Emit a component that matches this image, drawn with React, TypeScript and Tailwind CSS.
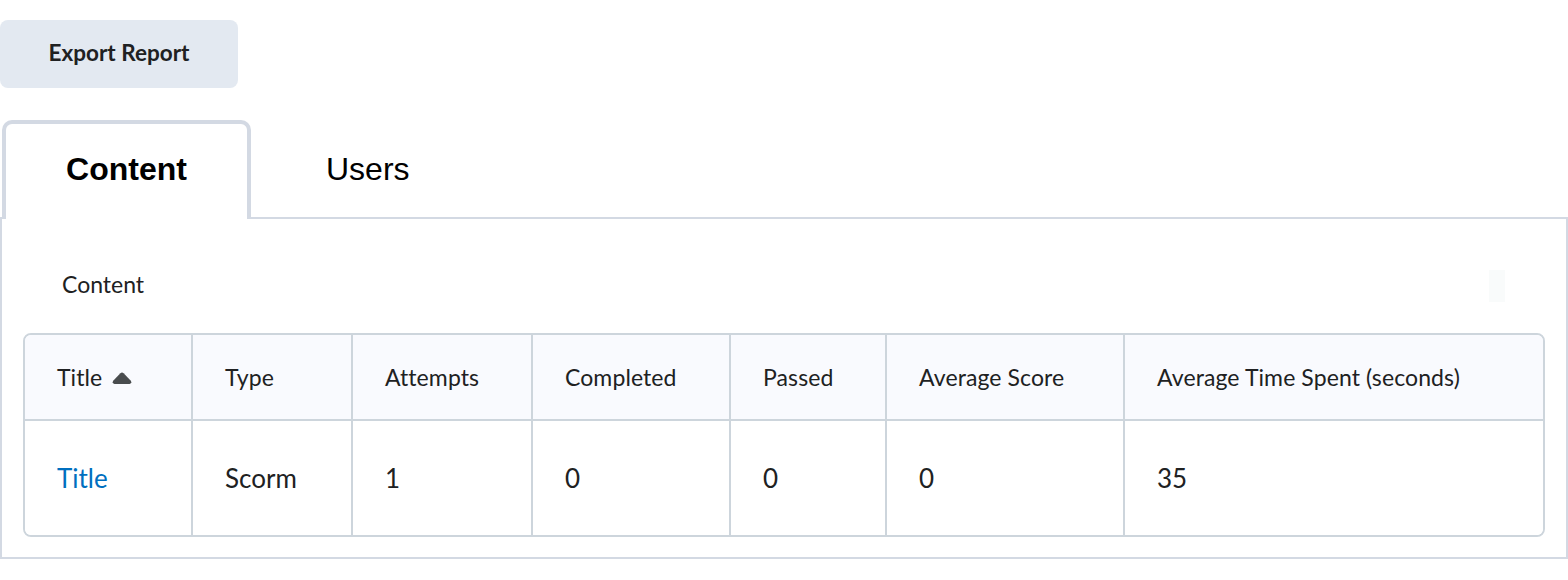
import React from 'react';

const columns = [
  'Title',
  'Type',
  'Attempts',
  'Completed',
  'Passed',
  'Average Score',
  'Average Time Spent (seconds)',
];

const row = ['Title', 'Scorm', '1', '0', '0', '0', '35'];

const SortUp = () => (
  <svg width="20" height="13" viewBox="0 0 20 13" className="ml-[10px] mt-[2px]">
    <path d="M8.4 1.2 Q10 -0.4 11.6 1.2 L18.6 8.6 Q20.4 11 17.6 12 L2.4 12 Q-0.4 11 1.4 8.6 Z" fill="#494c4e" />
  </svg>
);

const App = () => {
  return (
    <div className="w-[1568px] h-[580px] bg-white font-['Lato','Noto_Sans',sans-serif] text-[#202122]">
      <div className="pt-[20px]">
        <button className="w-[238px] h-[68px] pb-[3px] rounded-lg bg-[#e3e9f1] text-[22.5px] font-bold text-[#202122]">
          Export Report
        </button>
      </div>

      {/* Tabs */}
      <div className="mt-[32px] flex items-end font-['Liberation_Sans','Arial',sans-serif] text-[32px] text-black">
        <div className="ml-[2px] w-[249px] h-[99px] -mb-[2px] relative z-10 bg-white border-4 border-b-0 border-[#d3d9e3] rounded-t-[10px] flex items-center justify-center pb-[6px] font-bold">
          Content
        </div>
        <div className="ml-[71px] h-[99px] -mb-[2px] border-4 border-b-0 border-transparent flex items-center pb-[6px]">
          Users
        </div>
      </div>

      {/* Panel */}
      <div className="w-[1568px] h-[342px] border-2 border-[#d3d9e3] pt-[50px] px-[21px]">
        <div className="flex items-start justify-between h-[64px]">
          <span className="ml-[39px] text-[23px] leading-[30px]">Content</span>
          <div className="mr-[40px] mt-[1px] w-[16px] h-[32px] bg-[#f9fbfb]"></div>
        </div>

        <div className="border-2 border-[#cdd5dc] rounded-lg overflow-hidden">
          <div className="grid grid-cols-[168px_160px_180px_198px_156px_238px_1fr] bg-[#f9fafe]">
            {columns.map((c, i) => (
              <div
                key={c}
                className={`h-[86px] border-b-2 border-[#cdd5dc] flex items-center pl-[32px] text-[23px] tracking-[0.1px] ${
                  i < columns.length - 1 ? 'border-r-2' : ''
                }`}
              >
                <span>{c}</span>
                {i === 0 && <SortUp />}
              </div>
            ))}
          </div>
          <div className="grid grid-cols-[168px_160px_180px_198px_156px_238px_1fr] bg-white">
            {row.map((v, i) => (
              <div
                key={i}
                className={`h-[114px] flex items-center pl-[32px] text-[26px] border-[#cdd5dc] ${
                  i < row.length - 1 ? 'border-r-2' : ''
                } ${i === 0 ? 'text-[#006fbf]' : ''}`}
              >
                {v}
              </div>
            ))}
          </div>
        </div>
      </div>
    </div>
  );
};

export default App;
